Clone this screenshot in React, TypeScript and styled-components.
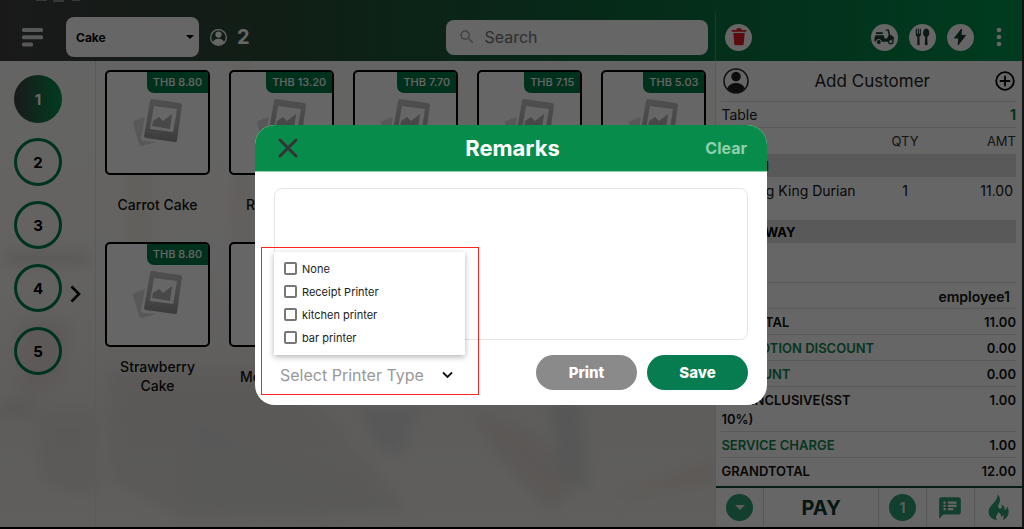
import React from "react";
import styled, { createGlobalStyle, css } from "styled-components";
import { MdSpeakerNotes, MdSearch } from "react-icons/md";

const GlobalStyle = createGlobalStyle`
  *, *::before, *::after { box-sizing: border-box; }
  body {
    margin: 0;
    background: #000;
    font-family: Inter, "Open Sans", "Liberation Sans", sans-serif;
    color: #111;
  }
  button, input, select, textarea { font: inherit; color: inherit; }
  button { border: 0; padding: 0; background: none; cursor: pointer; }
`;

const brand = "#088c4c";
const deep = "#067c50";
const mint = "#309e74";

/* ---------- shell ---------- */

const Shell = styled.div`
  display: flex;
  flex-direction: column;
  min-height: 100vh;
  border-right: 2px solid #333;
  border-bottom: 2px solid #000;
  background: #fff;
`;

const columns = css`
  display: grid;
  grid-template-columns: minmax(0, 7fr) minmax(0, 3fr);
`;

const TopBar = styled.header`
  ${columns}
  position: relative;
  padding-top: 13px;
  background: linear-gradient(90deg, #414042 0%, #2c4b38 25%, #0f6a3e 60%, #00954f 100%);
  color: #fff;
`;

const ClippedMarks = styled.svg`
  position: absolute;
  top: 0;
  left: 36px;
`;

const TopLeft = styled.div`
  display: flex;
  align-items: center;
  height: 48px;
  padding: 0 7px 0 22px;
`;

const TopRight = styled.div`
  display: flex;
  align-items: center;
  gap: 11px;
  padding: 0 20px 0 9px;
  border-left: 1px solid rgba(255, 255, 255, 0.25);
`;

const MenuButton = styled.button`
  display: flex;
  margin-right: 23px;
`;

const CategoryField = styled.label`
  display: flex;
  align-items: center;
  width: 133px;
  height: 40px;
  padding-right: 5px;
  border-radius: 8px;
  background: #fff;
  color: #000;
`;

const CategorySelect = styled.select`
  flex: 1;
  min-width: 0;
  height: 100%;
  padding: 0 0 0 10px;
  border: 0;
  background: none;
  appearance: none;
  font-size: 12px;
  font-weight: 700;
`;

const Guests = styled.div`
  display: flex;
  align-items: center;
  gap: 10px;
  margin-left: 11px;
  font-size: 20px;
  font-weight: 700;
`;

const SearchField = styled.label`
  display: flex;
  align-items: center;
  gap: 8px;
  width: 262px;
  height: 35px;
  margin-left: auto;
  padding: 0 12px;
  border-radius: 8px;
  background: #fff;
  color: #aaa;
`;

const SearchInput = styled.input`
  flex: 1;
  min-width: 0;
  border: 0;
  padding: 0;
  background: none;
  font-size: 16px;
  color: #333;
  &::placeholder { color: #757575; opacity: 1; }
`;

const RoundButton = styled.button<{ $push?: boolean }>`
  display: flex;
  align-items: center;
  justify-content: center;
  width: 27px;
  height: 27px;
  border-radius: 50%;
  background: #fff;
  margin-right: ${(p) => (p.$push ? "auto" : "0")};
`;

const DotsButton = styled.button`
  display: flex;
  margin-left: 11px;
`;

const Body = styled.div`
  ${columns}
  flex: 1;
`;

const Catalogue = styled.main`
  position: relative;
  display: flex;
  background: linear-gradient(180deg, #fcfbf9 0%, #f8f6f4 45%, #ebe8e4 75%, #efede9 100%);
`;

const Backdrop = styled.svg`
  position: absolute;
  inset: 0;
  width: 100%;
  height: 100%;
  opacity: 0.7;
`;

/* ---------- floors and products ---------- */

const Rail = styled.nav`
  position: relative;
  display: flex;
  align-items: center;
  gap: 8px;
  width: 96px;
  padding-left: 14px;
  border-right: 1px solid #e2e2e2;
`;

const RailList = styled.div`
  display: flex;
  flex-direction: column;
  align-self: flex-start;
  gap: 15px;
  padding-top: 14px;
`;

const RailButton = styled.button<{ $active?: boolean }>`
  width: 48px;
  height: 48px;
  border-radius: 50%;
  font-size: 15px;
  font-weight: 700;
  ${(p) =>
    p.$active
      ? css`
          background: linear-gradient(90deg, #414042, #00954f);
          color: #fff;
        `
      : css`
          border: 3px solid #00804a;
          color: #000;
        `}
`;

const RailNext = styled.button`
  display: flex;
`;

const ProductGrid = styled.div`
  position: relative;
  flex: 1;
  display: grid;
  grid-template-columns: repeat(5, minmax(0, 1fr));
  align-content: start;
  gap: 9px 19px;
  padding: 9px;
`;

const ProductCard = styled.button`
  display: flex;
  flex-direction: column;
`;

const Thumb = styled.span`
  position: relative;
  width: 100%;
  aspect-ratio: 1;
  border: 2px solid #000;
  border-radius: 5px;
  background: #fff;
  overflow: hidden;
`;

const Price = styled.span`
  position: absolute;
  top: 0;
  right: 0;
  padding: 0 6px;
  border-bottom-left-radius: 7px;
  background: #007a48;
  color: #fff;
  font-size: 11px;
  font-weight: 500;
  line-height: 21px;
`;

const ProductName = styled.span`
  display: flex;
  align-items: center;
  justify-content: center;
  width: 100%;
  height: 58px;
  padding: 0 8px;
  font-size: 14px;
  font-weight: 500;
  line-height: 19px;
  text-align: center;
`;

/* ---------- order panel ---------- */

const Order = styled.aside`
  display: flex;
  flex-direction: column;
  border-left: 1px solid #e2e2e2;
  background: #fff;
`;

const OrderContent = styled.div`
  flex: 1;
  padding: 0 6px 0 5px;
`;

const CustomerRow = styled.button`
  display: flex;
  align-items: center;
  justify-content: space-between;
  width: 100%;
  height: 40px;
  padding: 0 1px 0 2px;
  font-size: 17px;
  color: #222;
`;

const TableRow = styled.div`
  display: flex;
  align-items: center;
  justify-content: space-between;
  height: 27px;
  border: solid #e2e2e2;
  border-width: 1px 0;
  font-size: 14px;
  color: #222;
`;

const TableNumber = styled.strong`
  color: ${deep};
`;

const Items = styled.table`
  width: 100%;
  border-collapse: collapse;
  font-size: 14px;

  th { height: 26px; padding: 0; font-size: 13px; font-weight: 400; color: #333; }
  td { height: 43px; padding: 4px 0 0; vertical-align: top; line-height: 19px; }
  th:nth-child(2), td:nth-child(2) { width: 50px; text-align: center; }
  th:nth-child(3), td:nth-child(3) { width: 86px; text-align: right; }
  td:nth-child(3) { padding-right: 3px; }
  tr > th[colspan] {
    height: 23px;
    background: #dedede;
    color: #000;
    font-weight: 700;
    text-align: left;
  }
`;

const Totals = styled.table`
  width: 100%;
  margin-top: 39px;
  border-collapse: collapse;
  table-layout: fixed;
  font-size: 13px;
  font-weight: 600;
  line-height: 19px;

  th, td { padding: 4px 0 2px; border-top: 1px solid #e2e2e2; vertical-align: top; }
  th { font-weight: 600; text-align: left; }
  td { text-align: right; }
`;

const LabelColumn = styled.col`
  width: 54%;
`;

const TotalRow = styled.tr<{ $green?: boolean }>`
  th { color: ${(p) => (p.$green ? "#12854f" : "#111")}; }
`;

const StaffCell = styled.td`
  && { padding-right: 6px; font-size: 14px; }
`;

const OrderActions = styled.footer`
  display: grid;
  grid-template-columns: 47px 1fr 48px 48px 48px;
  height: 41px;
  border-top: 2px solid #0d4a37;
`;

const Action = styled.button`
  display: flex;
  align-items: center;
  justify-content: center;
  color: ${mint};
  & + & { border-left: 1px solid #dcdcdc; }
`;

const PayAction = styled(Action)`
  color: #12382c;
  font-size: 20px;
  font-weight: 700;
`;

const Badge = styled.span`
  display: flex;
  align-items: center;
  justify-content: center;
  width: 27px;
  height: 27px;
  border-radius: 50%;
  background: ${mint};
  color: #e8e8e8;
  font-size: 15px;
  font-weight: 600;
`;

/* ---------- dialog ---------- */

const Overlay = styled.div`
  position: fixed;
  inset: 0;
  display: flex;
  align-items: center;
  justify-content: center;
  background: rgba(0, 0, 0, 0.6);
`;

const Dialog = styled.section`
  width: 50%;
  margin: 1px 2px 0 0;
  border-radius: 20px;
  background: #fff;
`;

const DialogHeader = styled.header`
  display: grid;
  grid-template-columns: 1fr auto 1fr;
  align-items: center;
  height: 47px;
  padding: 0 20px 0 23px;
  border-bottom: 1px solid #8fd0ae;
  border-radius: 20px 20px 0 0;
  background: ${brand};
  color: #fff;
`;

const DialogTitle = styled.h1`
  margin: 0;
  font-size: 22px;
  font-weight: 700;
`;

const CloseButton = styled.button`
  display: flex;
  justify-self: start;
`;

const ClearButton = styled.button`
  justify-self: end;
  color: #8fd1ae;
  font-size: 16px;
  font-weight: 700;
`;

const DialogBody = styled.div`
  padding: 16px 19px 10px;
`;

const Notes = styled.textarea`
  display: block;
  width: 100%;
  height: 152px;
  border: 1px solid #e4e4e4;
  border-radius: 8px;
  resize: none;
`;

const DialogActions = styled.div`
  display: flex;
  align-items: flex-start;
  gap: 10px;
  margin-top: 15px;
`;

const PrinterField = styled.div`
  position: relative;
  margin-right: auto;
`;

const PrinterToggle = styled.button`
  display: flex;
  align-items: center;
  justify-content: space-between;
  width: 191px;
  height: 40px;
  padding: 0 12px 0 6px;
  color: #999;
  font-size: 16px;
`;

const PrinterMenu = styled.div`
  position: absolute;
  bottom: 100%;
  left: 0;
  width: 191px;
  padding: 5px 10px 6px;
  background: #fff;
  box-shadow: 0 2px 6px rgba(0, 0, 0, 0.3);
`;

const Option = styled.label`
  display: flex;
  align-items: center;
  gap: 5px;
  height: 23px;
  font-size: 11px;
  color: #222;
`;

const Check = styled.input`
  width: 13px;
  height: 13px;
  margin: 0;
  border: 2px solid #777;
  border-radius: 2px;
  appearance: none;
  &:checked { background: ${brand}; }
`;

const Highlight = styled.div`
  position: absolute;
  inset: -108px -14px 0 -13px;
  border: 1px solid #f22;
  pointer-events: none;
`;

const PillButton = styled.button<{ $tone: string }>`
  width: 101px;
  height: 35px;
  border-radius: 18px;
  background: ${(p) => p.$tone};
  color: #fff;
  font-size: 15px;
  font-weight: 800;
`;

/* ---------- drawings ---------- */

const Person = ({ size, stroke }: { size: number; stroke: number }) => (
  <svg width={size} height={size} viewBox="0 0 26 26" aria-hidden="true">
    <circle cx="13" cy="13" r="12" fill="none" stroke="currentColor" strokeWidth={stroke} />
    <circle cx="13" cy="8.6" r="4.8" fill="currentColor" />
    <path d="M4.2 20.2c1.8-3.600 5-5.200 8.800-5.200s7 1.600 8.800 5.200A11.500 11.500 0 0 1 13 24.600a11.500 11.500 0 0 1-8.800-4.400z" fill="currentColor" />
  </svg>
);

const Trash = () => (
  <svg width="16" height="18" viewBox="0 0 16 18" fill="#e0202c" aria-hidden="true">
    <path d="M5.500 2V1.200c0-.6.4-1 1-1h3c.6 0 1 .4 1 1V2h4c.5 0 .8.300.8.700v1H.7v-1c0-.4.3-.7.8-.7z" />
    <path d="M2.300 5h11.400l-1 11c-.1.800-.6 1.300-1.400 1.300H4.700c-.8 0-1.300-.5-1.400-1.300z" />
  </svg>
);

const Scooter = () => (
  <svg width="21" height="16" viewBox="0 0 21 16" aria-hidden="true" fill="#1f3d31">
    <path d="M2 3.200h6.700v1.900H2z" />
    <path d="M1.200 6.200h8.600l.7 3.400h2.600l1.500-3.300-.9-4.500h-2V.5h3.200l1.300 5.600c2.500.3 4 2 4.200 4.300h-3.600c-1.500.1-2.200 1-2.600 2.300H7.800c-.3-1.700-1.500-2.600-3-2.600-1.600 0-2.700.9-3.100 2.500H.5V9.600c0-1 .3-1.900.9-2.500z" />
    <circle cx="4.800" cy="13" r="2" />
    <circle cx="16.800" cy="12.600" r="2.200" fill="none" stroke="#1f3d31" strokeWidth="1.300" />
  </svg>
);

const Utensils = () => (
  <svg width="15" height="18" viewBox="0 0 15 18" aria-hidden="true" fill="#1f3d31">
    <path d="M.8.700h1.100v5h.9v-5h1.100v5h.9v-5h1.100v5.500c0 1.400-.7 2.200-1.500 2.500l.3 7.600c0 1.400-2.400 1.400-2.400 0L2.400 8.700C1.500 8.400.8 7.600.8 6.200z" />
    <path d="M11.200.5c1.900 0 3.100 2.200 3.100 4.400 0 2-.8 3.300-2 3.800l.3 7.600c0 1.400-2.800 1.400-2.800 0l.3-7.600c-1.200-.5-2-1.800-2-3.800 0-2.200 1.200-4.400 3.100-4.400z" />
  </svg>
);

const Bolt = () => (
  <svg width="14" height="18" viewBox="0 0 14 18" aria-hidden="true">
    <path d="M8.500 1 1.500 10h4.300l-.7 7 7.400-9.600H8z" fill="#1f3d31" stroke="#1f3d31" strokeWidth="1" strokeLinejoin="round" />
  </svg>
);

const Flame = () => (
  <svg width="21" height="27" viewBox="0 0 21 27" aria-hidden="true" fill="currentColor">
    <path d="M9.600.6c2.600 2.700 3.200 5.600 1.700 8.500-1 1.900-1.500 3.200-.8 4.600.9 1.500 2.900 1.200 3.300-.5.2-.9 0-1.700-.4-2.600 2.500 1 3.600 3.200 3.300 5.500 1.500-.5 2.200-1.700 2.500-3.700 1.500 2.600 1.900 5.600.9 8.300-.9 2.600-2.700 4.500-5.400 5.300 1.200-1.600 1.300-3.300.3-4.900-.4 1-1 1.600-2 1.900.2-2.200-.6-3.900-2.700-5.100.1 1.900-1.900 2.900-2.200 4.900-.2 1.300.2 2.400 1 3.400C4 25.300 1.300 22.700.7 19.200.1 15.400 2 12.600 4.700 9.900 7.600 7 9.600 4.500 9.600.6z" />
  </svg>
);

const Caret = ({ width }: { width: number }) => (
  <svg width={width} height={width / 2} viewBox="0 0 10 5" aria-hidden="true">
    <path d="M0 0h10L5 5z" fill="currentColor" />
  </svg>
);

const PhotoPlaceholder = ({ id }: { id: string }) => (
  <svg viewBox="2 2 101 101" width="100%" height="100%" aria-hidden="true">
    <defs>
      <linearGradient id={id} x1="0" y1="0" x2="0" y2="1">
        <stop offset="0" stopColor="#c4c4c4" />
        <stop offset="0.6" stopColor="#b4b4b4" />
        <stop offset="1" stopColor="#929292" />
      </linearGradient>
    </defs>
    <path d="M29 51l11-4-4 21q0 3 3 3l12 1-14 4q-2 0-3-2l-6-21q0-2 1-2z" fill="#dcdcdc" />
    <path d="M47 29l28 4q2 0 2 2l-5 35q0 2-2 2l-29-4q-2 0-2-2l6-35q0-2 2-2z" fill={`url(#${id})`} />
    <path d="M49 36l23 3-4 23-23-3z" fill="#fff" />
    <path d="M48 51l6-4 4 4 9-7-2 15-18-3z" fill="#b4b4b4" />
  </svg>
);

const Scene = () => (
  <Backdrop viewBox="0 0 715 466" preserveAspectRatio="none" aria-hidden="true">
    <defs>
      <filter id="soft" x="-20%" y="-20%" width="140%" height="140%">
        <feGaussianBlur stdDeviation="7" />
      </filter>
    </defs>
    <g filter="url(#soft)">
      <path d="M5 190h85v14H5z" fill="#d8d4d0" />
      <path d="M20 260h50l-8 60-42 20z" fill="#e4d8d4" />
      <path d="M38 350h60v80q-40 10-58-20z" fill="#e2dcd8" />
      <path d="M0 342h34v12H0z" fill="#d4d2ce" />
      <path d="M110 310h180l120 140-230 8-70-40z" fill="#dfdcd8" />
      <path d="M190 350l90 40 130 60-230 6z" fill="#dad9d8" />
      <path d="M360 345h60l-20 50q-30 0-40-50z" fill="#d5d6da" />
      <path d="M470 350l60 20 50 50-30 30q-50-50-80-100z" fill="#dfd4d0" />
      <path d="M550 340h30l8 90-30-20z" fill="#cfd1d3" />
      <path d="M600 440l115-40v20z" fill="#ead6cc" />
      <path d="M130 60h20v190h-20zM235 0h16v260h-16z" fill="#f0e6dc" />
    </g>
  </Backdrop>
);

/* ---------- data ---------- */

const floors = [1, 2, 3, 4, 5];

const products = [
  { price: "THB 8.80", name: "Carrot Cake" },
  { price: "THB 13.20", name: "Red Velvet" },
  { price: "THB 7.70", name: "" },
  { price: "THB 7.15", name: "" },
  { price: "THB 5.03", name: "" },
  { price: "THB 8.80", name: "Strawberry Cake" },
  { price: "", name: "Mocha Cake" },
];

const totals = [
  { label: "SUBTOTAL", value: "11.00" },
  { label: "PROMOTION DISCOUNT", value: "0.00", green: true },
  { label: "DISCOUNT", value: "0.00", green: true },
  { label: "TAX INCLUSIVE(SST 10%)", value: "1.00" },
  { label: "SERVICE CHARGE", value: "1.00", green: true },
  { label: "GRANDTOTAL", value: "12.00" },
];

const printers = ["None", "Receipt Printer", "kitchen printer", "bar printer"];

export default function App() {
  return (
    <>
      <GlobalStyle />
      <Shell>
        <TopBar>
          <ClippedMarks width="46" height="2" fill="#8a8a8a" aria-hidden="true">
            <path d="M0 0h11v1H0zM17 0h11v2H17zM36 0h8v1h-8z" />
          </ClippedMarks>
          <TopLeft>
            <MenuButton aria-label="Menu">
              <svg width="21" height="19" viewBox="0 0 21 19" fill="#ddd" aria-hidden="true">
                <rect width="21" height="4" rx="1.500" />
                <rect y="7.300" width="21" height="4" rx="1.500" />
                <rect y="14.600" width="11" height="4" rx="1.500" />
              </svg>
            </MenuButton>
            <CategoryField>
              <CategorySelect aria-label="Category">
                <option>Cake</option>
              </CategorySelect>
              <Caret width={8} />
            </CategoryField>
            <Guests>
              <Person size={17} stroke={2} />
              <span>2</span>
            </Guests>
            <SearchField>
              <MdSearch size={18} />
              <SearchInput type="text" placeholder="Search" aria-label="Search" />
            </SearchField>
          </TopLeft>
          <TopRight>
            <RoundButton $push aria-label="Delete order"><Trash /></RoundButton>
            <RoundButton aria-label="Delivery"><Scooter /></RoundButton>
            <RoundButton aria-label="Dine in"><Utensils /></RoundButton>
            <RoundButton aria-label="Quick order"><Bolt /></RoundButton>
            <DotsButton aria-label="More">
              <svg width="6" height="20" viewBox="0 0 6 20" fill="#fff" aria-hidden="true">
                <circle cx="3" cy="3" r="2.300" />
                <circle cx="3" cy="10" r="2.300" />
                <circle cx="3" cy="17" r="2.300" />
              </svg>
            </DotsButton>
          </TopRight>
        </TopBar>

        <Body>
          <Catalogue>
            <Scene />
            <Rail>
              <RailList>
                {floors.map((n) => (
                  <RailButton key={n} $active={n === 1}>{n}</RailButton>
                ))}
              </RailList>
              <RailNext aria-label="Next">
                <svg width="11" height="18" viewBox="0 0 11 18" aria-hidden="true">
                  <path d="M1.500 1.500 9 9l-7.500 7.500" fill="none" stroke="#000" strokeWidth="2.600" />
                </svg>
              </RailNext>
            </Rail>
            <ProductGrid>
              {products.map((p, i) => (
                <ProductCard key={i}>
                  <Thumb>
                    <PhotoPlaceholder id={`photo${i}`} />
                    {p.price && <Price>{p.price}</Price>}
                  </Thumb>
                  <ProductName>{p.name}</ProductName>
                </ProductCard>
              ))}
            </ProductGrid>
          </Catalogue>

          <Order>
            <OrderContent>
              <CustomerRow>
                <Person size={26} stroke={1.5} />
                <span>Add Customer</span>
                <svg width="20" height="20" viewBox="0 0 20 20" fill="none" stroke="#000" strokeWidth="1.800" strokeLinecap="round" aria-hidden="true">
                  <circle cx="10" cy="10" r="8.800" />
                  <path d="M10 5.500v9M5.500 10h9" />
                </svg>
              </CustomerRow>
              <TableRow>
                <span>Table</span>
                <TableNumber>1</TableNumber>
              </TableRow>
              <Items>
                <thead>
                  <tr>
                    <th aria-label="Item" />
                    <th>QTY</th>
                    <th>AMT</th>
                  </tr>
                </thead>
                <tbody>
                  <tr><th colSpan={3}>DINE IN</th></tr>
                  <tr>
                    <td>Musang King Durian</td>
                    <td>1</td>
                    <td>11.00</td>
                  </tr>
                  <tr><th colSpan={3}>TAKEAWAY</th></tr>
                </tbody>
              </Items>
              <Totals>
                <colgroup>
                  <LabelColumn />
                  <col />
                </colgroup>
                <tbody>
                  <tr>
                    <StaffCell colSpan={2}>employee1</StaffCell>
                  </tr>
                  {totals.map((t) => (
                    <TotalRow key={t.label} $green={t.green}>
                      <th scope="row">{t.label}</th>
                      <td>{t.value}</td>
                    </TotalRow>
                  ))}
                </tbody>
              </Totals>
            </OrderContent>
            <OrderActions>
              <Action aria-label="More actions">
                <Badge><Caret width={10} /></Badge>
              </Action>
              <PayAction>PAY</PayAction>
              <Action><Badge>1</Badge></Action>
              <Action aria-label="Remarks"><MdSpeakerNotes size={26} /></Action>
              <Action aria-label="Send to kitchen"><Flame /></Action>
            </OrderActions>
          </Order>
        </Body>
      </Shell>

      <Overlay>
        <Dialog role="dialog" aria-modal="true" aria-labelledby="remarks-title">
          <DialogHeader>
            <CloseButton aria-label="Close">
              <svg width="20" height="20" viewBox="0 0 20 20" aria-hidden="true">
                <path d="M2 2l16 16M18 2 2 18" stroke="#333" strokeWidth="3" strokeLinecap="round" />
              </svg>
            </CloseButton>
            <DialogTitle id="remarks-title">Remarks</DialogTitle>
            <ClearButton>Clear</ClearButton>
          </DialogHeader>
          <DialogBody>
            <Notes aria-label="Remarks" />
            <DialogActions>
              <PrinterField>
                <PrinterToggle aria-expanded="true">
                  <span>Select Printer Type</span>
                  <svg width="11" height="8" viewBox="0 0 11 8" aria-hidden="true">
                    <path d="M1 1.500 5.500 6 10 1.500" fill="none" stroke="#111" strokeWidth="1.800" />
                  </svg>
                </PrinterToggle>
                <PrinterMenu>
                  {printers.map((name) => (
                    <Option key={name}>
                      <Check type="checkbox" />
                      {name}
                    </Option>
                  ))}
                </PrinterMenu>
                <Highlight />
              </PrinterField>
              <PillButton $tone="#8a8a8a">Print</PillButton>
              <PillButton $tone={deep}>Save</PillButton>
            </DialogActions>
          </DialogBody>
        </Dialog>
      </Overlay>
    </>
  );
}
